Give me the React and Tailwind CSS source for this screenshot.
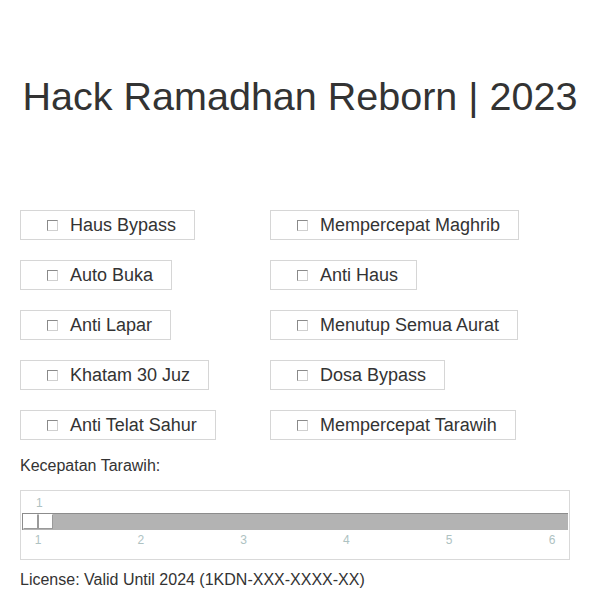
import React from "react";

const left = ["Haus Bypass", "Auto Buka", "Anti Lapar", "Khatam 30 Juz", "Anti Telat Sahur"];
const right = ["Mempercepat Maghrib", "Anti Haus", "Menutup Semua Aurat", "Dosa Bypass", "Mempercepat Tarawih"];

function Item({ label }) {
  return (
    <div className="flex">
      <label className="flex h-[30px] items-center border border-[#d6d6d6] pl-[26px] pr-[18px] text-[18px] text-[#333]">
        <span className="mr-[12px] block h-[11px] w-[11px] border border-[#d0d0d0] border-l-[#8a8a8a] border-t-[#8a8a8a] bg-white"></span>
        <span>{label}</span>
      </label>
    </div>
  );
}

export default function App() {
  const ticks = [1, 2, 3, 4, 5, 6];
  return (
    <div className="h-[600px] w-[600px] overflow-hidden bg-white px-[20px] text-[#333]" style={{ fontFamily: '"Liberation Sans", Arial, sans-serif' }}>
      <h1 className="-mx-[20px] whitespace-nowrap pt-[72px] text-center text-[39.5px] leading-[48px] text-[#333]">Hack Ramadhan Reborn | 2023</h1>
      <div className="mt-[90px] grid grid-cols-[250px_1fr] gap-y-[20px]">
        {left.map((l, i) => (
          <React.Fragment key={i}>
            <Item label={l} />
            <Item label={right[i]} />
          </React.Fragment>
        ))}
      </div>
      <div className="mt-[16px] text-[16px] leading-[20px]">Kecepatan Tarawih:</div>
      <div className="mt-[14px] h-[70px] w-[550px] border border-[#d9d9d9] px-[1px] pt-[5px]">
        <div className="pl-[14px] text-[12px] leading-[14px] text-[#aec2c2]">1</div>
        <div className="relative mt-[3px] h-[17px] border-l border-t border-[#8c8c8c] bg-[#b3b3b3]">
          <div className="absolute left-0 top-0 flex h-[15px]">
            <div className="h-[15px] w-[15px] border border-[#9a9a9a] border-l-white border-t-white bg-white"></div>
            <div className="h-[15px] w-[15px] border border-[#9a9a9a] border-t-white bg-white"></div>
          </div>
        </div>
        <div className="relative mt-[3px] h-[16px] text-[12px] leading-[14px] text-[#aec2c2]">
          {ticks.map((t, i) => (
            <span key={t} className="absolute top-0 -translate-x-1/2" style={{ left: `${16 + i * 102.8}px` }}>{t}</span>
          ))}
        </div>
      </div>
      <div className="mt-[10px] text-[16px] leading-[20px]">License: Valid Until 2024 (1KDN-XXX-XXXX-XX)</div>
    </div>
  );
}
